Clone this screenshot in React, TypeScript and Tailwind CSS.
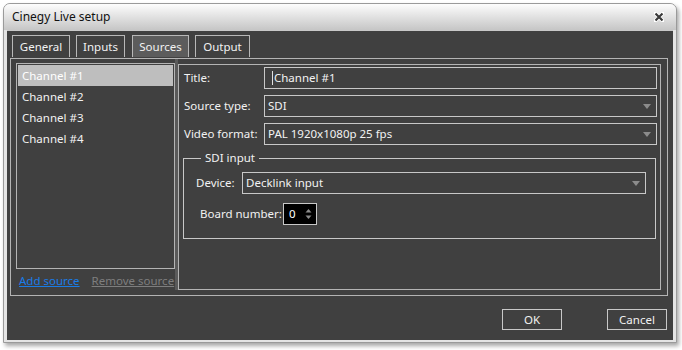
import React from "react";

const font = { fontFamily: '"Noto Sans", "Open Sans", Arial, sans-serif' };

function Arrow() {
  return (
    <svg width="8" height="5" viewBox="0 0 8 5" className="shrink-0">
      <path d="M0 0 H8 L4 5 Z" fill="#8c8c8c" />
    </svg>
  );
}

function Combo({ value, className }: { value: string; className?: string }) {
  return (
    <div className={"h-[22px] border border-[#c8c8c8] flex items-center justify-between pl-[3px] pr-[5px] " + (className ?? "")}>
      <span className="text-[#f2f2f2] whitespace-nowrap">{value}</span>
      <Arrow />
    </div>
  );
}

export default function App() {
  const tabs = [
    { name: "General", w: "w-[58px]" },
    { name: "Inputs", w: "w-[49px]" },
    { name: "Sources", w: "w-[57px]" },
    { name: "Output", w: "w-[55px]" },
  ];
  const channels = ["Channel #1", "Channel #2", "Channel #3", "Channel #4"];

  return (
    <div className="w-[682px] h-[350px] bg-white pt-[3px] text-[11.5px] leading-none whitespace-nowrap" style={font}>
      <div className="ml-[3px] w-[674px] h-[340px] rounded-t-[7px] border border-[#9a9a9a] bg-[#e4e4e4] flex flex-col shadow-[2px_3px_4px_rgba(0,0,0,0.35)]">
        {/* title bar */}
        <div className="h-[26px] shrink-0 rounded-t-[6px] bg-gradient-to-b from-[#fdfdfd] to-[#c6c6c6] flex items-center justify-between pl-[8px] pr-[12px]">
          <span className="text-[#111] text-[12px]">Cinegy Live setup</span>
          <svg width="10" height="10" viewBox="0 0 10 10">
            <path d="M1 1 L9 9 M9 1 L1 9" stroke="#ffffff" strokeWidth="4" strokeLinecap="round" />
            <path d="M1.5 1.5 L8.5 8.5 M8.5 1.5 L1.5 8.5" stroke="#3a3a3a" strokeWidth="2.2" />
          </svg>
        </div>

        {/* client area */}
        <div className="mx-[3px] mb-[2px] flex-1 bg-[#404040] border-t border-[#c8c8c8] flex flex-col text-[#f2f2f2]">
          {/* tabs */}
          <div className="flex pt-[4px] pl-[5px] h-[27px] shrink-0">
            {tabs.map((t, i) => (
              <div
                key={t.name}
                className={
                  "h-[22px] border border-b-0 border-[#b8b8b8] flex items-center justify-center " +
                  t.w +
                  (i === 2 ? " bg-[#5c5c5c]" : "") +
                  (i === 0 ? "" : i === 2 ? " ml-[7px]" : " ml-[6px]")
                }
              >
                {t.name}
              </div>
            ))}
          </div>

          {/* tab panel */}
          <div className="ml-[3px] w-[658px] h-[238px] shrink-0 border border-[#b4b4b4] flex">
            {/* left column */}
            <div className="w-[164px] shrink-0 pl-[5px] pt-[4px] flex flex-col">
              <div className="h-[206px] border border-[#b4b4b4] p-px">
                {channels.map((c, i) => (
                  <div key={c} className={"h-[21px] flex items-center px-[4px] " + (i === 0 ? "bg-[#bebebe] text-white" : "")}>
                    {c}
                  </div>
                ))}
              </div>
              <div className="flex items-center h-[24px] pl-[3px] gap-[12px]">
                <span className="text-[#1a7ce6] underline">Add source</span>
                <span className="text-[#7e7e7e] underline">Remove source</span>
              </div>
            </div>

            {/* splitter */}
            <div className="w-[3px] shrink-0 bg-[#5a5a5a] mb-[5px]" />

            {/* right panel */}
            <div className="flex-1 mt-[5px] mb-[5px] mr-[6px] border border-[#b4b4b4] pt-[2px] pr-[3px] flex flex-col">
              <div className="flex items-center">
                <span className="w-[85px] shrink-0 pl-[5px]">Title:</span>
                <div className="flex-1 h-[22px] border border-[#c8c8c8] flex items-center pl-[7px]">
                  <span className="w-px h-[14px] bg-[#e0e0e0] mr-px" />
                  <span>Channel #1</span>
                </div>
              </div>
              <div className="flex items-center mt-[6px]">
                <span className="w-[85px] shrink-0 pl-[5px]">Source type:</span>
                <Combo value="SDI" className="flex-1" />
              </div>
              <div className="flex items-center mt-[6px]">
                <span className="w-[85px] shrink-0 pl-[5px]">Video format:</span>
                <Combo value="PAL 1920x1080p 25 fps" className="flex-1" />
              </div>

              <fieldset className="mt-[6px] ml-[4px] mr-[1px] h-[88px] border border-[#c8c8c8] pl-[12px] pr-[9px]">
                <legend className="ml-[5px] px-[4px] leading-[14px]">SDI input</legend>
                <div className="flex items-center mt-[7px]">
                  <span className="w-[46px] shrink-0">Device:</span>
                  <Combo value="Decklink input" className="flex-1" />
                </div>
                <div className="flex items-center mt-[9px] pl-[4px]">
                  <span className="w-[83px] shrink-0">Board number:</span>
                  <div className="w-[34px] h-[22px] bg-black border border-[#c8c8c8] flex items-center justify-between pl-[5px] pr-[4px]">
                    <span className="text-white">0</span>
                    <svg width="7" height="12" viewBox="0 0 7 12">
                      <path d="M0.5 4.5 L3.5 1 L6.5 4.5 Z" fill="#8c8c8c" />
                      <path d="M0.5 7.5 L3.5 11 L6.5 7.5 Z" fill="#8c8c8c" />
                    </svg>
                  </div>
                </div>
              </fieldset>
            </div>
          </div>

          {/* buttons */}
          <div className="flex justify-end mt-[13px] pr-[6px] gap-[45px]">
            <div className="w-[60px] h-[21px] border border-[#c8c8c8] flex items-center justify-center">OK</div>
            <div className="w-[60px] h-[21px] border border-[#c8c8c8] flex items-center justify-center">Cancel</div>
          </div>
        </div>
      </div>
    </div>
  );
}
